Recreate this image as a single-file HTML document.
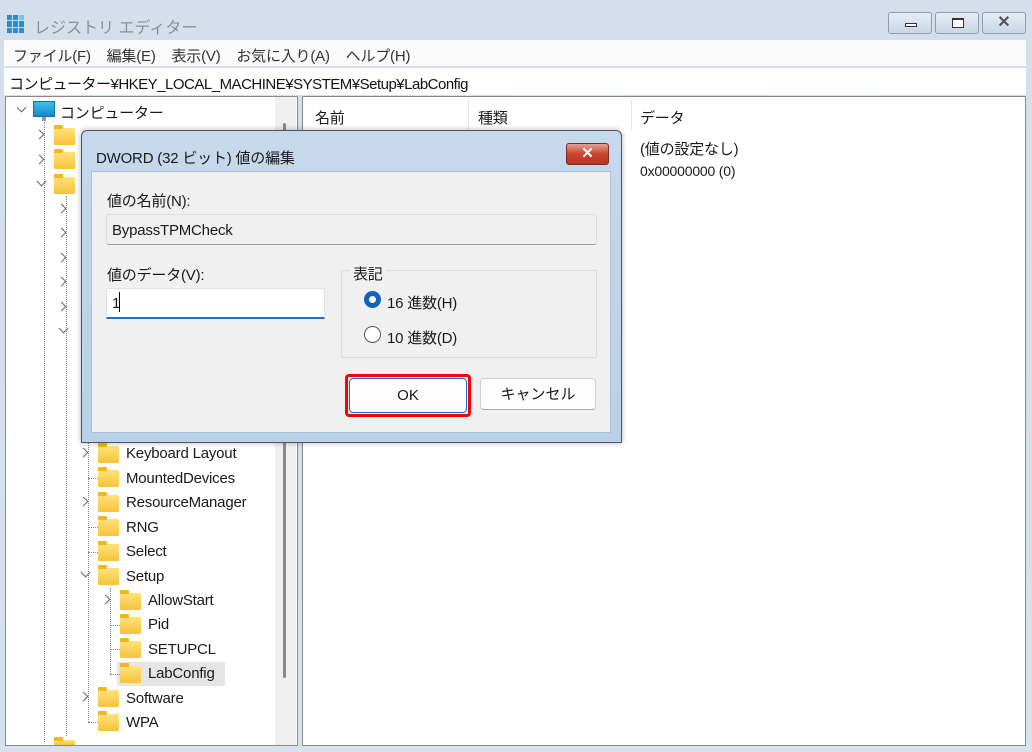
<!DOCTYPE html>
<html><head><meta charset="utf-8">
<style>
*{margin:0;padding:0;box-sizing:border-box}
body{width:1032px;height:752px;overflow:hidden;position:relative;background:linear-gradient(#d4dfeb,#d6e2ee);font-family:"Liberation Sans","Noto Sans CJK JP",sans-serif;font-size:15px;color:#1a1a1a}
.a{position:absolute;white-space:nowrap}
.t{position:absolute;white-space:nowrap;margin-top:2px;letter-spacing:-0.2px}
.fd{position:absolute;width:21px;height:17px;background:linear-gradient(#ffe27a,#f7c33c);border-radius:1px}
.fd:before{content:"";position:absolute;left:0;top:-3px;width:9px;height:4px;background:#f2b61f;border-radius:1px 1px 0 0}
.ch{position:absolute;width:7px;height:7px;border-right:1.5px solid #666;border-bottom:1.5px solid #666}
.r{transform:rotate(-45deg)}
.d{transform:rotate(45deg)}
.vl{position:absolute;border-left:1px dotted #888}
.hl{position:absolute;border-top:1px dotted #888;width:10px}
.wb{position:absolute;top:12px;width:44px;height:22px;border:1px solid #8d9cb0;border-radius:3px;background:linear-gradient(#e6edf5,#c9d6e5)}
</style></head><body>
<div class="a" style="left:7px;top:15px;width:18px;height:18px;display:grid;grid-template-columns:repeat(3,5px);gap:1px">
<div style="background:#1f8fd6"></div><div style="background:#1f8fd6"></div><div style="background:#7bc3ef"></div>
<div style="background:#1f8fd6"></div><div style="background:#1f8fd6"></div><div style="background:#1f8fd6"></div>
<div style="background:#1f8fd6"></div><div style="background:#1f8fd6"></div><div style="background:#1f8fd6"></div></div>
<div class="a" style="left:34px;top:14px;font-size:16px;color:#8a8f96">レジストリ エディター</div>
<div class="wb" style="left:888px"><div style="position:absolute;left:16px;top:10px;width:12px;height:4px;border:1px solid #333;background:#fff"></div></div>
<div class="wb" style="left:935px"><div style="position:absolute;left:16px;top:5px;width:12px;height:10px;border:1px solid #333;border-top-width:2px;background:#fff"></div></div>
<div class="wb" style="left:982px;font-size:16px;text-align:center;line-height:19px;color:#555;font-weight:bold">✕</div>
<div class="a" style="left:4px;top:40px;width:1022px;height:26px;background:#fafafa"></div>
<div class="a" style="left:13px;top:45px;color:#333;letter-spacing:-0.2px">ファイル(F)&nbsp;&nbsp;&nbsp; 編集(E)&nbsp;&nbsp;&nbsp; 表示(V)&nbsp;&nbsp;&nbsp; お気に入り(A)&nbsp;&nbsp;&nbsp; ヘルプ(H)</div>
<div class="a" style="left:4px;top:68px;width:1022px;height:27px;background:#fff"></div>
<div class="a" style="left:9px;top:73px;color:#111;font-size:15px;letter-spacing:-0.5px">コンピューター¥HKEY_LOCAL_MACHINE¥SYSTEM¥Setup¥LabConfig</div>
<div class="a" style="left:5px;top:96px;width:293px;height:650px;background:#fff;border:1px solid #8a8a8a"></div>
<div class="a" style="left:275px;top:97px;width:21px;height:648px;background:#f0f0f0"></div>
<div class="a" style="left:283px;top:123px;width:3px;height:555px;background:#8a8a8a;border-radius:2px"></div>
<div class="a" style="left:302px;top:96px;width:724px;height:650px;background:#fff;border:1px solid #8a8a8a"></div>
<div class="a" style="left:468px;top:99px;height:31px;border-left:1px solid #e5e5e5"></div>
<div class="a" style="left:631px;top:99px;height:31px;border-left:1px solid #e5e5e5"></div>
<div class="t" style="left:315px;top:105px">名前</div>
<div class="t" style="left:478px;top:105px">種類</div>
<div class="t" style="left:640px;top:105px">データ</div>
<div class="t" style="left:640px;top:136px">(値の設定なし)</div>
<div class="t" style="left:640px;top:161px;font-size:14px">0x00000000 (0)</div>
<div class="ch d" style="left:18px;top:104px"></div>
<div class="a" style="left:33px;top:101px;width:22px;height:16px;background:linear-gradient(#3bc0ef,#1a87c9);border:1px solid #1570a8"></div>
<div class="a" style="left:42px;top:117px;width:4px;height:4px;background:#999"></div>
<div class="t" style="left:60px;top:100px">コンピューター</div>
<div class="vl" style="left:44px;top:122px;height:620px"></div>
<div class="ch r" style="left:36px;top:131px"></div><div class="fd" style="left:54px;top:128px"></div>
<div class="ch r" style="left:36px;top:156px"></div><div class="fd" style="left:54px;top:152px"></div>
<div class="ch d" style="left:38px;top:178px"></div><div class="fd" style="left:54px;top:177px"></div>
<div class="vl" style="left:66px;top:196px;height:540px"></div>
<div class="ch r" style="left:58px;top:205px"></div>
<div class="ch r" style="left:58px;top:229px"></div>
<div class="ch r" style="left:58px;top:254px"></div>
<div class="ch r" style="left:58px;top:278px"></div>
<div class="ch r" style="left:58px;top:303px"></div>
<div class="ch d" style="left:60px;top:325px"></div>
<div class="vl" style="left:88px;top:440px;height:282px"></div>
<div class="ch r" style="left:80px;top:449px"></div><div class="fd" style="left:98px;top:446px"></div><div class="t" style="left:126px;top:443px">Keyboard Layout</div>
<div class="hl" style="left:88px;top:478px"></div><div class="fd" style="left:98px;top:470px"></div><div class="t" style="left:126px;top:468px">MountedDevices</div>
<div class="ch r" style="left:80px;top:498px"></div><div class="fd" style="left:98px;top:495px"></div><div class="t" style="left:126px;top:492px">ResourceManager</div>
<div class="hl" style="left:88px;top:527px"></div><div class="fd" style="left:98px;top:519px"></div><div class="t" style="left:126px;top:517px">RNG</div>
<div class="hl" style="left:88px;top:552px"></div><div class="fd" style="left:98px;top:544px"></div><div class="t" style="left:126px;top:541px">Select</div>
<div class="ch d" style="left:82px;top:569px"></div><div class="fd" style="left:98px;top:568px"></div><div class="t" style="left:126px;top:566px">Setup</div>
<div class="vl" style="left:110px;top:588px;height:86px"></div>
<div class="ch r" style="left:102px;top:596px"></div><div class="fd" style="left:120px;top:593px"></div><div class="t" style="left:148px;top:590px">AllowStart</div>
<div class="hl" style="left:110px;top:625px"></div><div class="fd" style="left:120px;top:617px"></div><div class="t" style="left:148px;top:614px">Pid</div>
<div class="hl" style="left:110px;top:649px"></div><div class="fd" style="left:120px;top:641px"></div><div class="t" style="left:148px;top:639px">SETUPCL</div>
<div class="a" style="left:117px;top:662px;width:108px;height:24px;background:#e5e5e5"></div>
<div class="hl" style="left:110px;top:674px"></div><div class="fd" style="left:120px;top:666px"></div><div class="t" style="left:148px;top:663px">LabConfig</div>
<div class="ch r" style="left:80px;top:693px"></div><div class="fd" style="left:98px;top:690px"></div><div class="t" style="left:126px;top:688px">Software</div>
<div class="hl" style="left:88px;top:722px"></div><div class="fd" style="left:98px;top:714px"></div><div class="t" style="left:126px;top:712px">WPA</div>
<div class="fd" style="left:54px;top:740px;height:5px"></div>
<div class="a" style="left:81px;top:130px;width:541px;height:313px;background:linear-gradient(#c6d8ec,#b9d0e8);border:1px solid #4b5563;border-radius:6px 6px 0 0;box-shadow:0 0 6px rgba(0,0,0,.3)"></div>
<div class="t" style="left:96px;top:145px;font-size:15px;color:#1a1a1a">DWORD (32 ビット) 値の編集</div>
<div class="a" style="left:566px;top:143px;width:43px;height:22px;border:1px solid #7a2a22;border-radius:3px;background:linear-gradient(#e8a094,#c8452f 50%,#b83420);color:#fff;font-weight:bold;text-align:center;line-height:20px;font-size:15px">✕</div>
<div class="a" style="left:91px;top:171px;width:520px;height:262px;background:#f0f0f0;border:1px solid #a9c0da"></div>
<div class="t" style="left:107px;top:188px">値の名前(N):</div>
<div class="a" style="left:106px;top:214px;width:491px;height:31px;background:#f0f0f0;border:1px solid #dcdcdc;border-bottom:1px solid #999;border-radius:3px"></div>
<div class="t" style="left:112px;top:220px">BypassTPMCheck</div>
<div class="t" style="left:107px;top:262px">値のデータ(V):</div>
<div class="a" style="left:106px;top:288px;width:219px;height:31px;background:#fff;border:1px solid #e0e0e0;border-bottom:2px solid #1a6fc8;border-radius:3px 3px 0 0"></div>
<div class="t" style="left:112px;top:293px">1</div>
<div class="a" style="left:119px;top:292px;width:1px;height:20px;background:#000"></div>
<div class="a" style="left:341px;top:270px;width:256px;height:88px;border:1px solid #dcdcdc;border-radius:2px"></div>
<div class="t" style="left:350px;top:261px;background:#f0f0f0;padding:0 3px">表記</div>
<div class="a" style="left:364px;top:291px;width:17px;height:17px;border-radius:50%;border:5px solid #1164b8;background:#fff"></div>
<div class="t" style="left:387px;top:290px">16 進数(H)</div>
<div class="a" style="left:364px;top:326px;width:17px;height:17px;border-radius:50%;border:1.5px solid #555;background:#fff"></div>
<div class="t" style="left:387px;top:325px">10 進数(D)</div>
<div class="a" style="left:345px;top:374px;width:126px;height:43px;border:3px solid #f00;border-radius:4px"></div>
<div class="a" style="left:349px;top:378px;width:118px;height:35px;background:#fdfdfd;border:1.5px solid #1a6fc8;border-radius:4px;text-align:center;line-height:33px">OK</div>
<div class="a" style="left:480px;top:378px;width:116px;height:32px;background:#fdfdfd;border:1px solid #d0d0d0;border-bottom-color:#aaa;border-radius:4px;text-align:center;line-height:32px">キャンセル</div>
</body></html>
